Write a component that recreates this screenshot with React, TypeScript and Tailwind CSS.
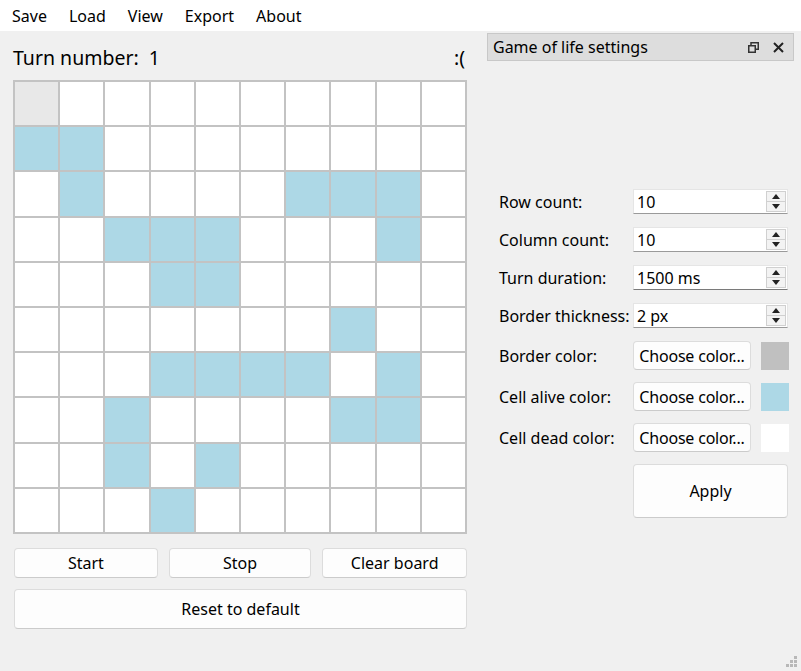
import React from "react"

const ALIVE: number[][] = [
  [],
  [0, 1],
  [1, 6, 7, 8],
  [2, 3, 4, 8],
  [3, 4],
  [7],
  [3, 4, 5, 6, 8],
  [2, 7, 8],
  [2, 4],
  [3],
]

const font = { fontFamily: '"Noto Sans", "Open Sans", sans-serif' }

function SpinBox({ value, focused = false }: { value: string; focused?: boolean }) {
  return (
    <div
      className={`flex h-[25px] w-[155px] items-center bg-white border border-[#e5e5e5] ${
        focused ? "border-b-[#7a7a7a]" : "border-b-[#9a9a9a]"
      }`}
    >
      <span className="flex-1 pl-[3px] text-[16px] text-black">{value}</span>
      <div className="mr-[1px] flex h-[21px] w-[20px] flex-col">
        <div className="flex flex-1 items-center justify-center border border-[#d0d0d0] bg-[#f3f3f3]">
          <svg width="8" height="5" viewBox="0 0 8 5">
            <path d="M0 5 L4 0 L8 5 Z" fill="#222" />
          </svg>
        </div>
        <div className="flex flex-1 items-center justify-center border border-t-0 border-[#d0d0d0] bg-[#f3f3f3]">
          <svg width="8" height="5" viewBox="0 0 8 5">
            <path d="M0 0 L8 0 L4 5 Z" fill="#222" />
          </svg>
        </div>
      </div>
    </div>
  )
}

function Button({ children, className = "" }: { children: React.ReactNode; className?: string }) {
  return (
    <button
      className={`flex items-center justify-center rounded-[4px] border border-[#dcdcdc] border-b-[#cbcbcb] bg-[#fdfdfd] text-[16px] text-black ${className}`}
    >
      {children}
    </button>
  )
}

function Board() {
  const cells = []
  for (let r = 0; r < 10; r++) {
    for (let c = 0; c < 10; c++) {
      const alive = ALIVE[r].includes(c)
      const selected = r === 0 && c === 0
      cells.push(
        <div
          key={`${r}-${c}`}
          className={alive ? "bg-[#add8e6]" : selected ? "bg-[#e8e8e8]" : "bg-white"}
        />
      )
    }
  }
  return (
    <div className="grid h-[454px] w-[454px] grid-cols-10 grid-rows-10 gap-[2px] bg-[#c3c3c3] p-[2px]">
      {cells}
    </div>
  )
}

function FormRow({ label, children }: { label: string; children: React.ReactNode }) {
  return (
    <div className="flex items-center">
      <span className="w-[134px] text-[16px] text-black">{label}</span>
      {children}
    </div>
  )
}

function ColorRow({ label, color }: { label: string; color: string }) {
  return (
    <FormRow label={label}>
      <Button className="h-[29px] w-[118px] whitespace-nowrap tracking-[-0.2px]">Choose color...</Button>
      <div className="ml-[10px] h-[28px] w-[28px]" style={{ backgroundColor: color }} />
    </FormRow>
  )
}

export default function App() {
  return (
    <div className="relative h-[671px] w-[801px] overflow-hidden bg-[#f0f0f0]" style={font}>
      <div className="flex h-[31px] items-center gap-[22px] bg-white pl-[12px] text-[16px] text-black">
        <span>Save</span>
        <span>Load</span>
        <span>View</span>
        <span>Export</span>
        <span>About</span>
      </div>

      <div className="flex">
        <div className="flex w-[480px] flex-col pl-[13px]">
          <div className="flex h-[49px] w-[454px] items-center justify-between pt-[4px] text-[19.5px] text-black">
            <span>
              Turn number:<span className="ml-[10px]">1</span>
            </span>
            <span className="pr-[2px]">:(</span>
          </div>
          <Board />
          <div className="mt-[14px] flex w-[454px] gap-[11px] pl-[1px]">
            <Button className="h-[30px] w-[144px]">Start</Button>
            <Button className="h-[30px] w-[143px]">Stop</Button>
            <Button className="h-[30px] w-[145px]">Clear board</Button>
          </div>
          <Button className="ml-[1px] mt-[11px] h-[40px] w-[453px]">Reset to default</Button>
        </div>

        <div className="mt-[2px] flex w-[314px] flex-col pl-[7px]">
          <div className="flex h-[28px] items-center justify-between border border-[#c8c8c8] bg-[#dddddd] pl-[5px] pr-[9px] text-[16px] text-black">
            <span>Game of life settings</span>
            <div className="flex items-center gap-[14px]">
              <svg width="11" height="11" viewBox="0 0 11 11">
                <rect x="3" y="0.75" width="7.25" height="6.5" fill="none" stroke="#333" strokeWidth="1.5" />
                <rect x="0.75" y="3.75" width="6.5" height="6.5" fill="#dddddd" stroke="#333" strokeWidth="1.5" />
              </svg>
              <svg width="11" height="11" viewBox="0 0 11 11">
                <path d="M1 1 L10 10 M10 1 L1 10" stroke="#222" strokeWidth="2" />
              </svg>
            </div>
          </div>

          <div className="mt-[128px] flex flex-col gap-[13px] pl-[12px]">
            <FormRow label="Row count:">
              <SpinBox value="10" />
            </FormRow>
            <FormRow label="Column count:">
              <SpinBox value="10" />
            </FormRow>
            <FormRow label="Turn duration:">
              <SpinBox value="1500 ms" focused />
            </FormRow>
            <FormRow label="Border thickness:">
              <SpinBox value="2 px" />
            </FormRow>
          </div>
          <div className="mt-[13px] flex flex-col gap-[12px] pl-[12px]">
            <ColorRow label="Border color:" color="#c0c0c0" />
            <ColorRow label="Cell alive color:" color="#add8e6" />
            <ColorRow label="Cell dead color:" color="#ffffff" />
          </div>
          <Button className="ml-[146px] mt-[12px] h-[54px] w-[155px]">Apply</Button>
        </div>
      </div>

      <svg className="absolute bottom-[3px] right-[3px]" width="12" height="12" viewBox="0 0 12 12">
        <rect x="8" y="0" width="3" height="3" fill="#b8b8b8" />
        <rect x="4" y="4" width="3" height="3" fill="#b8b8b8" />
        <rect x="8" y="4" width="3" height="3" fill="#b8b8b8" />
        <rect x="0" y="8" width="3" height="3" fill="#b8b8b8" />
        <rect x="4" y="8" width="3" height="3" fill="#b8b8b8" />
        <rect x="8" y="8" width="3" height="3" fill="#b8b8b8" />
      </svg>
    </div>
  )
}
